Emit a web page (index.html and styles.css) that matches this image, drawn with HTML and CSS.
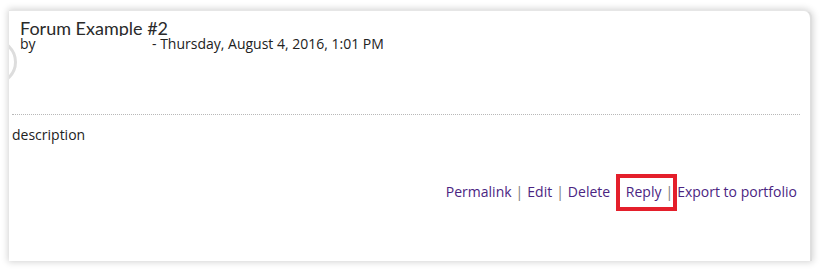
FILE: index.html
```html
<!DOCTYPE html>
<html>
<head>
<meta charset="utf-8">
<link rel="stylesheet" href="styles.css">
</head>
<body>
<div class="frame">
  <div class="card">
    <div class="avatar-edge"></div>
    <div class="header">
      <div class="title">Forum Example #2</div>
      <div class="byline"><span class="by">by</span><span class="date">- Thursday, August 4, 2016, 1:01 PM</span></div>
    </div>
    <div class="divider"></div>
    <div class="content">description</div>
    <div class="commands">
      <a class="link">Permalink</a><span class="sep">|</span><a class="link">Edit</a><span class="sep">|</span><a class="link">Delete</a><span class="sep">|</span><span class="reply-wrap"><a class="link">Reply</a><span class="sep">|</span><span class="highlight"></span></span><a class="link">Export to portfolio</a>
    </div>
  </div>
</div>
</body>
</html>
```
FILE: styles.css
```css
html, body {
  margin: 0;
  padding: 0;
  background: #ffffff;
}
body {
  width: 824px;
  height: 269px;
  overflow: hidden;
  font-family: "Open Sans", "Liberation Sans", sans-serif;
  color: #333333;
}
.frame {
  padding: 10px 13px 8px 9px;
}
.card {
  position: relative;
  box-sizing: border-box;
  width: 803px;
  height: 251px;
  background: #ffffff;
  border-top: 1px solid #e6e6e6;
  border-right: 2px solid #dedede;
  border-top-right-radius: 8px;
  box-shadow: 0 0 7px 1px rgba(0, 0, 0, 0.18);
  overflow: hidden;
}
.avatar-edge {
  position: absolute;
  left: -38px;
  top: 28px;
  width: 40px;
  height: 40px;
  border-radius: 50%;
  border: 3px solid #dddddd;
}
.header {
  padding: 8px 0 0 11px;
  height: 92px;
  box-sizing: border-box;
}
.title {
  font-family: "Lato", "Open Sans", sans-serif;
  font-size: 18px;
  line-height: 18px;
  height: 17px;
  overflow: hidden;
  color: #2a2a2a;
}
.byline {
  font-size: 14px;
  line-height: 15px;
  color: #222222;
  display: flex;
}
.by {
  width: 132px;
}
.divider {
  margin: 11px 10px 0 3px;
  border-top: 1px dotted #b8b8b8;
}
.content {
  margin-top: 11px;
  padding-left: 3px;
  font-size: 14px;
  line-height: 18px;
  color: #222222;
}
.commands {
  margin-top: 39px;
  padding-right: 13px;
  display: flex;
  justify-content: flex-end;
  align-items: baseline;
  font-size: 14px;
  line-height: 18px;
}
.link {
  color: #4b2582;
}
.sep {
  color: #7a7a7a;
  margin: 0 4px;
}
.reply-wrap {
  position: relative;
  display: inline-flex;
  align-items: baseline;
}
.highlight {
  position: absolute;
  left: -10px;
  right: 0;
  top: -9px;
  bottom: -10px;
  border: 4px solid #e41f2b;
}
```
